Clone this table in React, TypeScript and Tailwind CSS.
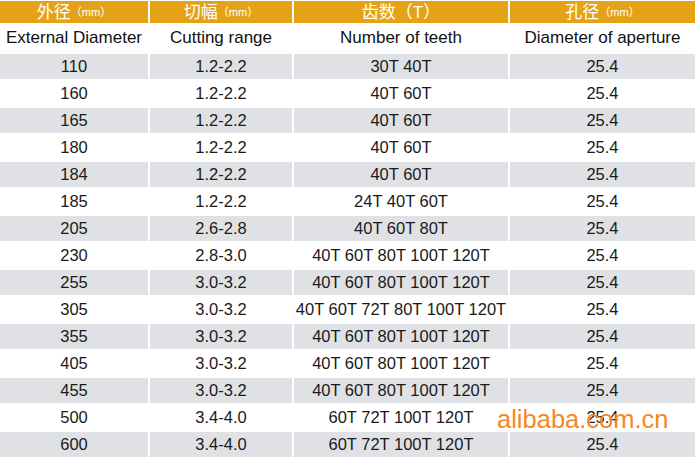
const rows = [
  ["110", "1.2-2.2", "30T 40T"],
  ["160", "1.2-2.2", "40T 60T"],
  ["165", "1.2-2.2", "40T 60T"],
  ["180", "1.2-2.2", "40T 60T"],
  ["184", "1.2-2.2", "40T 60T"],
  ["185", "1.2-2.2", "24T 40T 60T"],
  ["205", "2.6-2.8", "40T 60T 80T"],
  ["230", "2.8-3.0", "40T 60T 80T 100T 120T"],
  ["255", "3.0-3.2", "40T 60T 80T 100T 120T"],
  ["305", "3.0-3.2", "40T 60T 72T 80T 100T 120T"],
  ["355", "3.0-3.2", "40T 60T 80T 100T 120T"],
  ["405", "3.0-3.2", "40T 60T 80T 100T 120T"],
  ["455", "3.0-3.2", "40T 60T 80T 100T 120T"],
  ["500", "3.4-4.0", "60T 72T 100T 120T"],
  ["600", "3.4-4.0", "60T 72T 100T 120T"],
];

const cols = "grid grid-cols-[148px_142px_214px_185px] gap-x-[2px]";

function Head({ zh, unit }: { zh: string; unit: string }) {
  return (
    <div className="bg-[#e6a216] h-[22px] flex items-center justify-center text-white text-[17px] leading-none">
      <span>{zh}</span>
      <span className="text-[11px]">{unit}</span>
    </div>
  );
}

export default function App() {
  return (
    <div
      className="relative w-[695px] h-[458px] bg-white overflow-hidden pt-[1px] text-[#1a1a1a]"
      style={{ fontFamily: '"Liberation Sans", "Noto Sans CJK SC", sans-serif' }}
    >
      <div className={cols}>
        <Head zh="外径" unit="（mm）" />
        <Head zh="切幅" unit="（mm）" />
        <Head zh="齿数（T）" unit="" />
        <Head zh="孔径" unit="（mm）" />
      </div>
      <div className={`${cols} h-[29px] items-center text-center text-[17px] text-[#111]`}>
        <div>External Diameter</div>
        <div>Cutting range</div>
        <div>Number of teeth</div>
        <div>Diameter of aperture</div>
      </div>
      <div className="flex flex-col gap-y-[2px] mt-[2px]">
        {rows.map((r, i) => (
          <div
            key={r[0]}
            className={`${cols} h-[25px] items-stretch text-center text-[16.5px] text-[#1a1a1a]`}
          >
            {[r[0], r[1], r[2], "25.4"].map((c, j) => (
              <div
                key={j}
                className={`flex items-center justify-center ${i % 2 === 0 ? "bg-[#dfe1e4]" : "bg-white"}`}
              >
                {c}
              </div>
            ))}
          </div>
        ))}
      </div>
      <div className="absolute left-[497px] top-[407px] text-[25.5px] leading-none text-[#f5881f]">
        alibaba.com.cn
      </div>
    </div>
  );
}
